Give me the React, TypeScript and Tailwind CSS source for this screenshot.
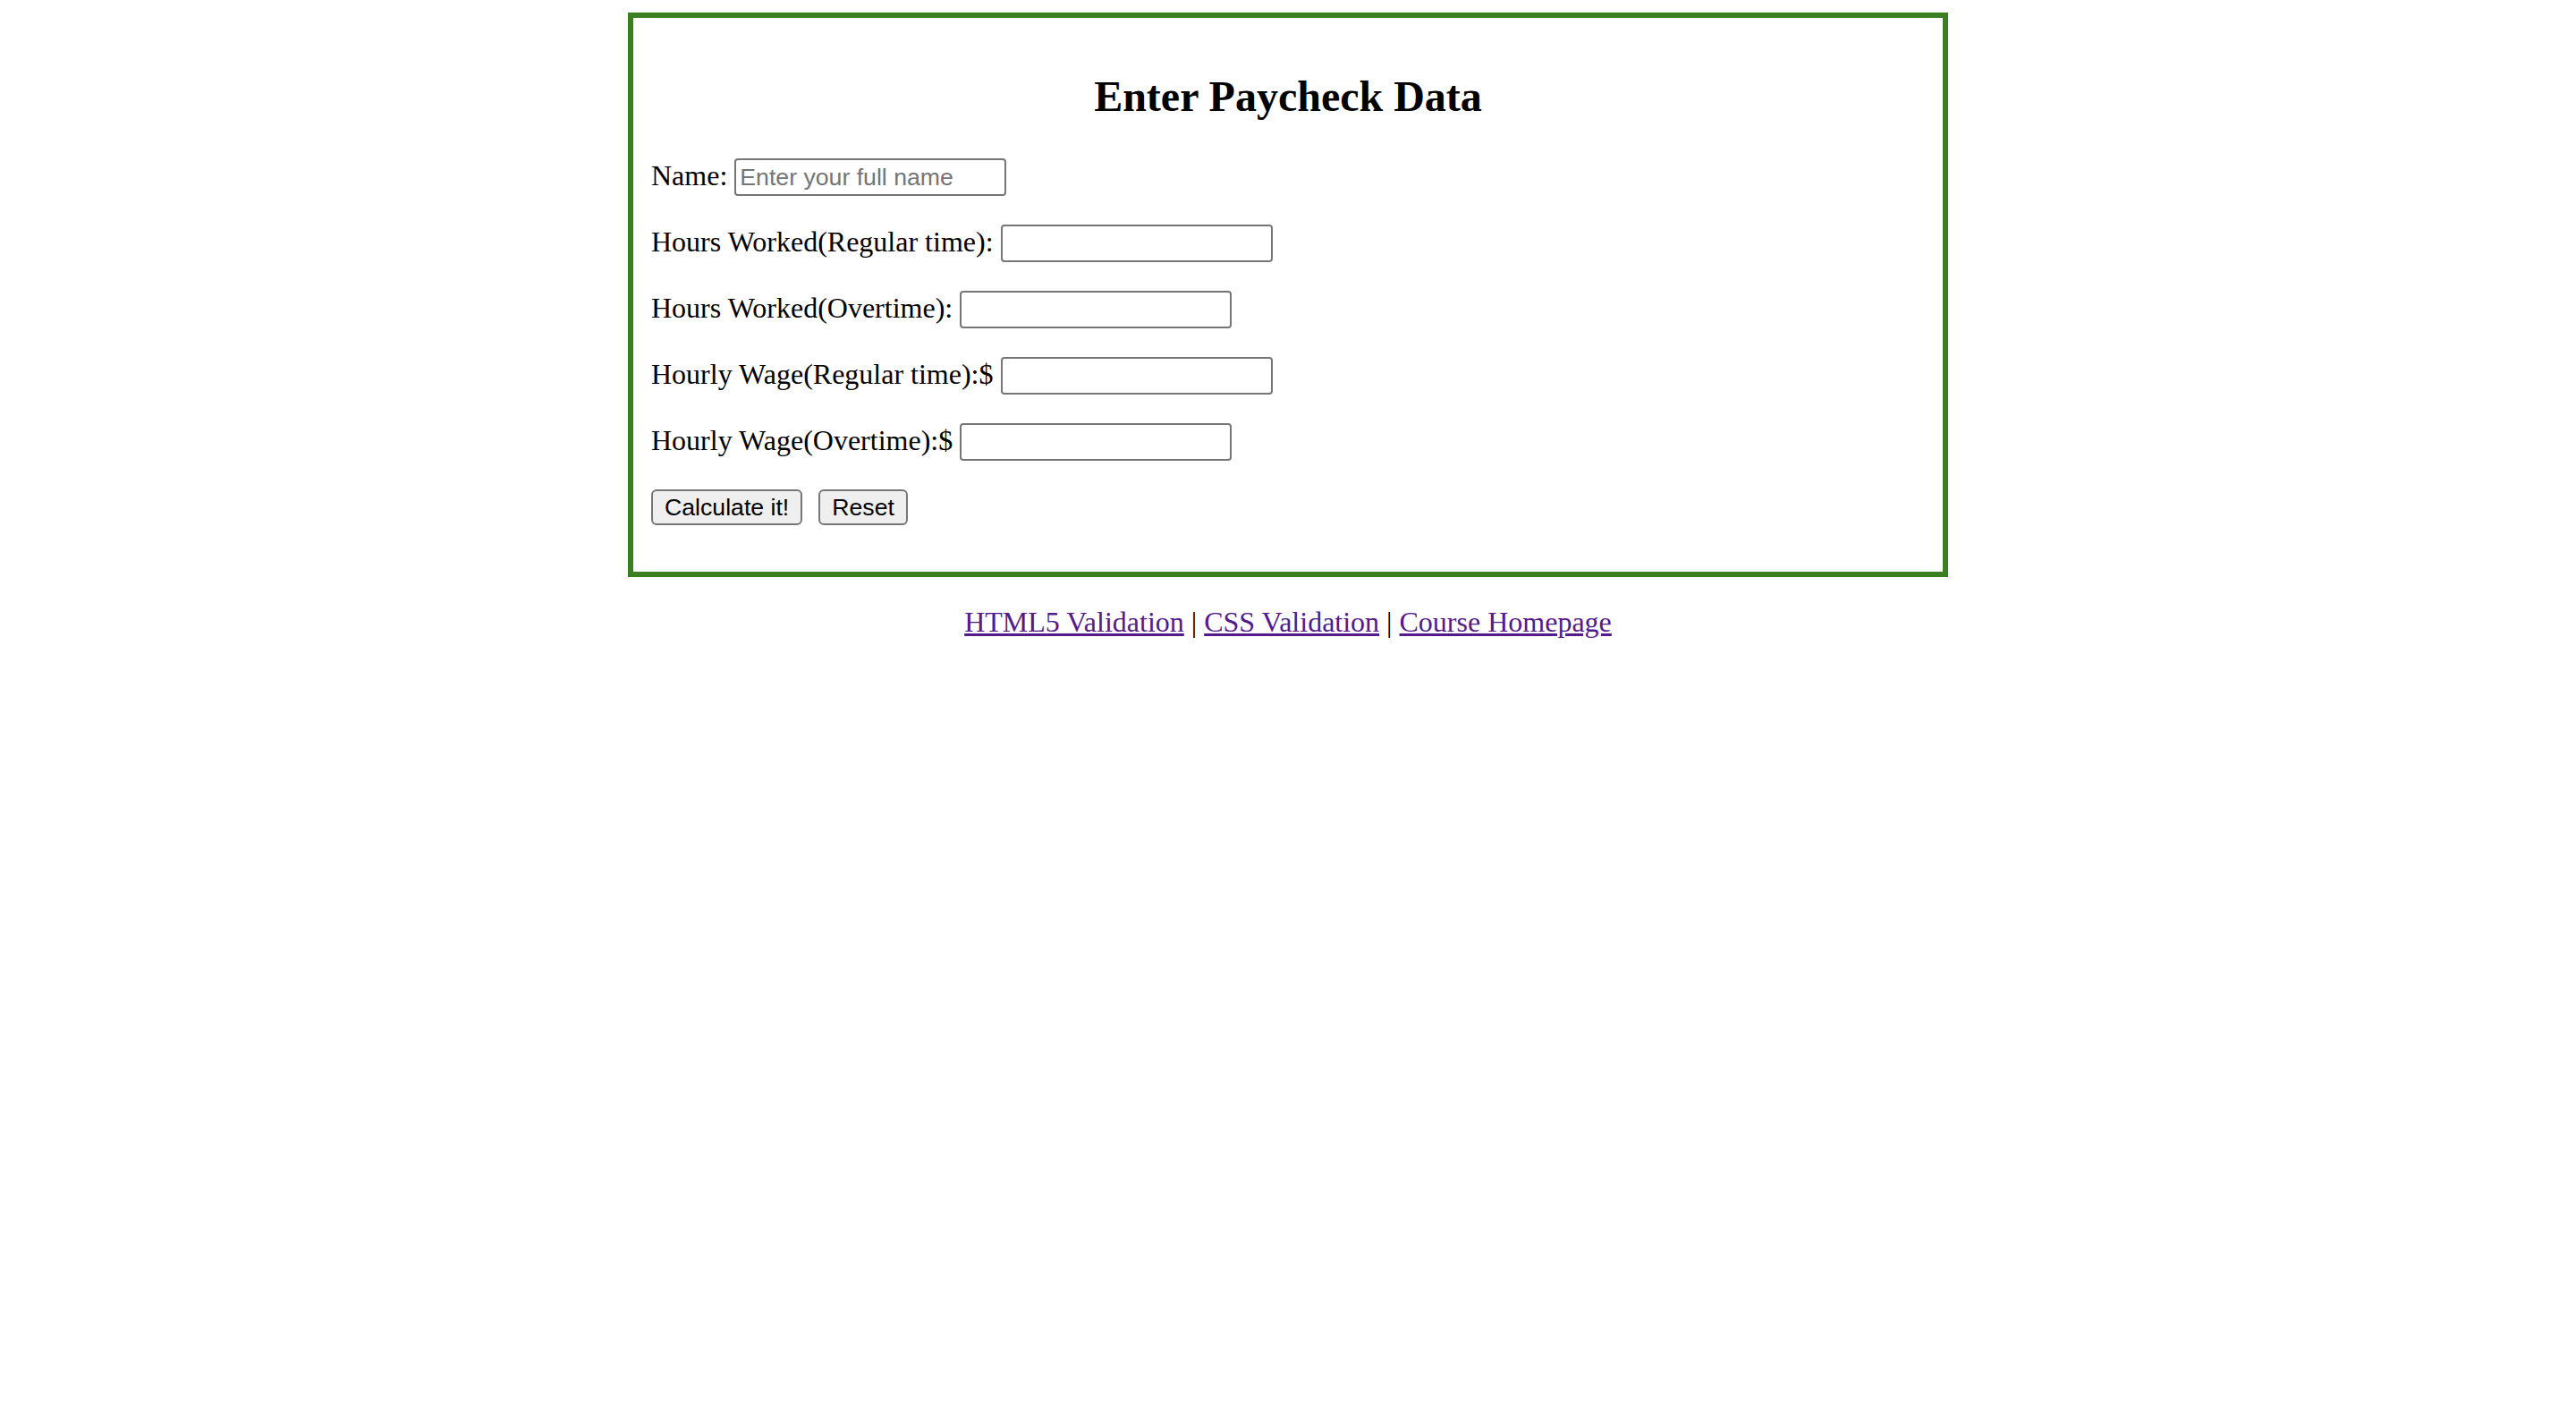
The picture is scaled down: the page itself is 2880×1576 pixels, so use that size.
import { useState } from "react";

const fields = [
  { id: "name", label: "Name: ", placeholder: "Enter your full name" },
  { id: "hours", label: "Hours Worked(Regular time): ", placeholder: "" },
  { id: "otHours", label: "Hours Worked(Overtime): ", placeholder: "" },
  { id: "wage", label: "Hourly Wage(Regular time):$ ", placeholder: "" },
  { id: "otWage", label: "Hourly Wage(Overtime):$ ", placeholder: "" },
];

const links = ["HTML5 Validation", "CSS Validation", "Course Homepage"];

export default function App() {
  const [values, setValues] = useState<Record<string, string>>({});

  return (
    <div className="min-h-screen bg-white pt-[14px] font-['Liberation_Serif',serif] text-[32px] leading-[normal] text-black">
      <form
        className="mx-auto w-[1476px] border-[6px] border-[#3a7f22] p-[20px]"
        onSubmit={(e) => e.preventDefault()}
        onReset={() => setValues({})}
      >
        <h2 className="mt-[40px] mb-[42px] text-center text-[48px] font-bold leading-[normal]">
          Enter Paycheck Data
        </h2>

        {fields.map((f) => (
          <p key={f.id} className="my-[32px]">
            <label htmlFor={f.id}>{f.label}</label>
            <input
              id={f.id}
              type="text"
              placeholder={f.placeholder}
              value={values[f.id] ?? ""}
              onChange={(e) => setValues({ ...values, [f.id]: e.target.value })}
              className="h-[42px] w-[304px] rounded-[4px] border-2 border-[#767676] bg-white px-[4px] align-baseline font-['Liberation_Sans',Arial,sans-serif] text-[26.67px] text-black placeholder:text-[#757575]"
            />
          </p>
        ))}

        <p className="my-[32px] flex items-center gap-[18px]">
          <button
            type="submit"
            className="h-[40px] rounded-[6px] border-2 border-[#767676] bg-[#efefef] px-[13px] font-['Liberation_Sans',Arial,sans-serif] text-[26.67px] leading-none text-black"
          >
            Calculate it!
          </button>
          <button
            type="reset"
            className="h-[40px] rounded-[6px] border-2 border-[#767676] bg-[#efefef] px-[13px] font-['Liberation_Sans',Arial,sans-serif] text-[26.67px] leading-none text-black"
          >
            Reset
          </button>
        </p>
      </form>

      <p className="my-[32px] text-center">
        {links.map((l, i) => (
          <span key={l}>
            {i > 0 && " | "}
            <a href="#" className="text-[#551a8b] underline">
              {l}
            </a>
          </span>
        ))}
      </p>
    </div>
  );
}
